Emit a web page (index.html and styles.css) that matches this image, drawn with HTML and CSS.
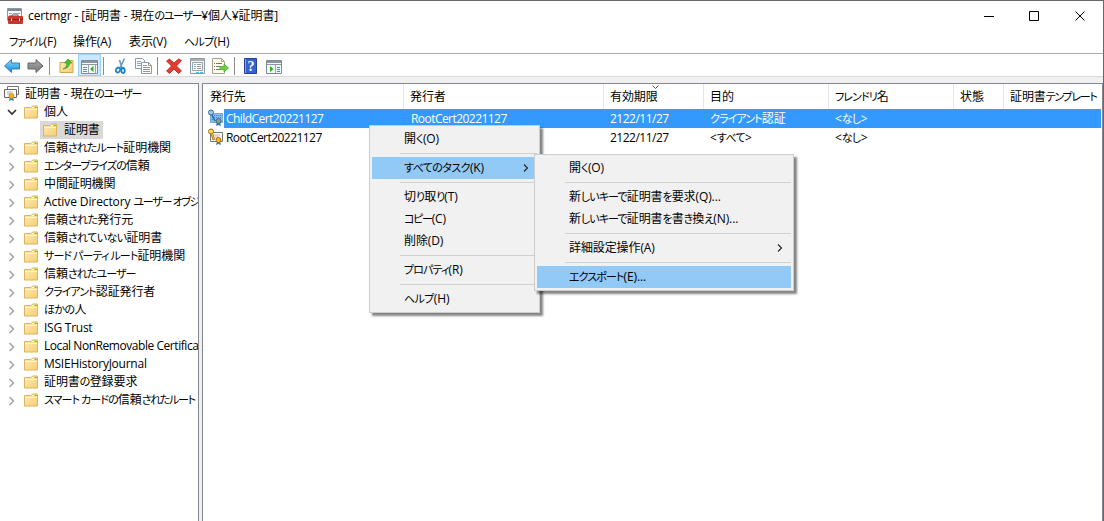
FILE: index.html
```
<!DOCTYPE html>
<html lang="ja">

<head>
  <meta charset="UTF-8">
  <link rel="stylesheet" href="styles.css">
  <title>certmgr</title>
</head>

<body>
  <!-- icônes réutilisées -->
  <svg class="defs" width="0" height="0">
    <defs>
      <linearGradient id="gold" x1="0" y1="0" x2="1" y2="1"><stop offset="0" stop-color="#ffebb0"/><stop offset="1" stop-color="#f3cf78"/></linearGradient>
      <linearGradient id="blue" x1="0" y1="0" x2="0" y2="1"><stop offset="0" stop-color="#8fdcff"/><stop offset="1" stop-color="#0a8ade"/></linearGradient>
      <linearGradient id="grey" x1="0" y1="0" x2="0" y2="1"><stop offset="0" stop-color="#aaa"/><stop offset="1" stop-color="#777"/></linearGradient>
    </defs>
    <symbol id="folder" viewBox="0 0 15 14">
      <path d="M.5 13V2.500h6.500l1.500-1.500h5v12z" fill="url(#gold)" stroke="#dcb35e"/>
      <path d="M8 2.500h4" stroke="#fff"/><path d="M10.500 2.500h2" stroke="#4a9be0"/>
      <path d="M1 4.500h12" stroke="#fff4cf"/>
    </symbol>
    <symbol id="chev" viewBox="0 0 8 10"><path d="M1.500 1l4 4-4 4" fill="none" stroke="#a6a6a6" stroke-width="1.600"/></symbol>
    <symbol id="sub" viewBox="0 0 6 8"><path d="M1 .5L4.500 4 1 7.500" fill="none" stroke="#222" stroke-width="1.100"/></symbol>
  </svg>

  <div class="window">
    <div class="titlebar">
      <svg class="app-icon" width="16" height="17" viewBox="0 0 16 17">
        <path d="M.5.5h14v12H.5z" fill="#f4f4f4" stroke="#8b98a5"/><path d="M1 2h13" stroke="#7d8b99" stroke-width="2"/><path d="M2 5.500h3M2 7.500h3M6 5.500h7" stroke="#9aa5b1"/>
        <path d="M5 8.500V7h6v1.500" fill="none" stroke="#555"/><rect x="1" y="8" width="15" height="8" rx="1" fill="#c8372e"/><path d="M1 11.500h15" stroke="#8d211b"/><path d="M4.500 10.500V13M12.500 10.500V13" stroke="#eee"/>
      </svg>
      <span class="title">certmgr - [証明書 - 現在<span class="k kk">のユーザー</span>¥個人¥証明書]</span>
      <svg class="ctl" width="102" height="12" viewBox="0 0 102 12" fill="none" stroke="#000">
        <path d="M0 6.500h10M45.500 1.500h9v9h-9zM91.500 1.500l9 9M100.500 1.500l-9 9"/>
      </svg>
    </div>
    <div class="menubar">
      <span class="m1"><span class="k">ファイル</span>(F)</span><span class="m2">操作(A)</span><span class="m3">表示(V)</span><span><span class="kh">ヘルプ</span>(H)</span>
    </div>
    <div class="toolbar">
      <div class="btn"><svg width="17" height="16" viewBox="0 0 17 16"><path d="M.5 8l7-6.500v3.500h8v6h-8v3.500z" fill="url(#blue)" stroke="#3b7fae"/></svg></div>
      <div class="btn"><svg width="17" height="16" viewBox="0 0 17 16"><path d="M16 8L9 1.500V5H1v6h8v3.500z" fill="url(#grey)" stroke="#666"/></svg></div>
      <div class="sep"></div>
      <div class="btn"><svg width="16" height="16" viewBox="0 0 16 16"><path d="M1 14.500v-10h6l1.500-2h5.500v12z" fill="url(#gold)" stroke="#cfa64f"/><path d="M4 11q4-1 4-6H5.500L9 1l4 4h-2.500q0 5-6.500 6z" fill="#45c22c" stroke="#258b18" stroke-width=".6"/></svg></div>
      <div class="btn on"><svg width="17" height="16" viewBox="0 0 17 16"><path d="M.5 2.500h16v13H.5z" fill="#f7f8f9" stroke="#7f8b96"/><path d="M1 4h15" stroke="#8b97a3" stroke-width="2"/><path d="M1 6.500h15" stroke="#8b97a3"/><path d="M2 9.500h4M2 11.500h4M2 13.500h4" stroke="#7c8895"/><path d="M7.500 7v8M14.500 7v8" stroke="#9ba6b0"/><path d="M12.500 8v6L9 11z" fill="#2fae1d"/></svg></div>
      <div class="sep"></div>
      <div class="btn"><svg width="14" height="16" viewBox="0 0 14 16" fill="none"><path d="M10.500.5L6 10M5.500 2L8 10" stroke="#6b9abb" stroke-width="1.600"/><ellipse cx="4" cy="12" rx="2" ry="2.500" transform="rotate(35 4 12)" stroke="#1283cf" stroke-width="1.800"/><ellipse cx="9" cy="12.500" rx="1.700" ry="2.500" stroke="#1283cf" stroke-width="1.800"/></svg></div>
      <div class="btn"><svg width="17" height="16" viewBox="0 0 17 16"><path d="M.5.5h7l2 2v8h-9z" fill="#fff" stroke="#8f9aa5"/><path d="M2 3.500h4M2 5.500h5M2 7.500h5" stroke="#86a5c4"/><path d="M6.500 4.500h7l3 3v8h-10z" fill="#fff" stroke="#8f9aa5"/><path d="M13.500 4.500v3h3" fill="none" stroke="#8f9aa5"/><path d="M8 7.500h4M8 9.500h7M8 11.500h7M8 13.500h7" stroke="#739dc9"/></svg></div>
      <div class="sep"></div>
      <div class="btn"><svg width="17" height="16" viewBox="0 0 17 16"><path d="M.5 3l3-2L8 5l4.500-4 3 1.500L10.500 8l5 5-3 2.500L8 11l-4.500 4.500L.5 13l5-5z" fill="#e73a2e" stroke="#b4231c" stroke-width=".8"/></svg></div>
      <div class="btn"><svg width="15" height="16" viewBox="0 0 15 16"><path d="M.5.5h14v15H.5z" fill="#f3f4f5" stroke="#8d98a2"/><path d="M1 2h13" stroke="#a6b0b9" stroke-width="2"/><path d="M2.500 4.500h10v8h-10z" fill="#fff" stroke="#98a3ad"/><path d="M4 6.500h2M4 8.500h2M4 10.500h2" stroke="#6fb4dc"/><path d="M7 6.500h4M7 8.500h4M7 10.500h4" stroke="#999"/><path d="M6 14.500h3M10 14.500h3" stroke="#50bfea"/></svg></div>
      <div class="btn"><svg width="17" height="16" viewBox="0 0 17 16"><path d="M.5.5h9l3 3v12H.5z" fill="#fffbe8" stroke="#a9a38c"/><path d="M9.500.5v3h3" fill="none" stroke="#a9a38c"/><path d="M2 5.500h1M2 8.500h1M2 11.500h1M4 5.500h6M4 8.500h4M4 11.500h4" stroke="#777"/><path d="M8 8.500h4V6l4.500 4-4.500 4v-2.500H8z" fill="#6ccf45" stroke="#3fa42c" stroke-width=".7"/></svg></div>
      <div class="sep"></div>
      <div class="btn"><svg class="help" width="14" height="16" viewBox="0 0 14 16"><path d="M.5.5h12v15H.5z" fill="#3562cf" stroke="#253f94"/><path d="M1.500 1v14" stroke="#7fa2ea"/><text x="7" y="13" class="q">?</text></svg></div>
      <div class="btn"><svg width="17" height="16" viewBox="0 0 17 16"><path d="M.5 2.500h15v13H.5z" fill="#f7f8f9" stroke="#7f8b96"/><path d="M1 4h14" stroke="#8b97a3" stroke-width="2"/><path d="M1 6.500h14" stroke="#8b97a3"/><path d="M9.500 7v8" stroke="#9ba6b0"/><path d="M11 9.500h3M11 11.500h3M11 13.500h3" stroke="#3c8bd0"/><path d="M4 8v6l3.500-3z" fill="#2fae1d"/></svg></div>
    </div>

    <div class="panes">
      <div class="tree">
        <div class="root">
          <svg width="16" height="16" viewBox="0 0 16 16"><path d="M3.500.5h11v8h-11z" fill="#fff" stroke="#777"/><path d="M.5 3.500h12v8H.5z" fill="#fff" stroke="#666"/><path d="M3 6h6M3 8h3" stroke="#aaa"/><path d="M6 11l-1 4 2.500-1 2.500 1-1-4z" fill="#2d7fd3"/><circle cx="7.500" cy="10" r="2.500" fill="#f2b41e" stroke="#b97b09" stroke-width=".7"/></svg>
          <span>証明書 - 現在<span class="k kk">のユーザー</span></span>
        </div>
        <div class="node"><svg class="arrow open" viewBox="0 0 10 8"><path d="M1 2l4 4 4-4" fill="none" stroke="#333" stroke-width="1.700"/></svg><svg class="fold"><use href="#folder"/></svg><span>個人</span></div>
        <div class="leaf"><svg class="fold"><use href="#folder"/></svg><span>証明書</span></div>
        <div class="node"><svg class="arrow"><use href="#chev"/></svg><svg class="fold"><use href="#folder"/></svg><span>信頼<span class="k">されたルート</span>証明機関</span></div>
        <div class="node"><svg class="arrow"><use href="#chev"/></svg><svg class="fold"><use href="#folder"/></svg><span><span class="k">エンタープライズの</span>信頼</span></div>
        <div class="node"><svg class="arrow"><use href="#chev"/></svg><svg class="fold"><use href="#folder"/></svg><span>中間証明機関</span></div>
        <div class="node"><svg class="arrow"><use href="#chev"/></svg><svg class="fold"><use href="#folder"/></svg><span>Active Directory <span class="k kk">ユーザー オブジ</span></span></div>
        <div class="node"><svg class="arrow"><use href="#chev"/></svg><svg class="fold"><use href="#folder"/></svg><span>信頼<span class="kh">された</span>発行元</span></div>
        <div class="node"><svg class="arrow"><use href="#chev"/></svg><svg class="fold"><use href="#folder"/></svg><span>信頼<span class="kh">されていない</span>証明書</span></div>
        <div class="node"><svg class="arrow"><use href="#chev"/></svg><svg class="fold"><use href="#folder"/></svg><span><span class="k">サード パーティ ルート</span>証明機関</span></div>
        <div class="node"><svg class="arrow"><use href="#chev"/></svg><svg class="fold"><use href="#folder"/></svg><span>信頼<span class="k">されたユーザー</span></span></div>
        <div class="node"><svg class="arrow"><use href="#chev"/></svg><svg class="fold"><use href="#folder"/></svg><span><span class="k">クライアント</span>認証発行者</span></div>
        <div class="node"><svg class="arrow"><use href="#chev"/></svg><svg class="fold"><use href="#folder"/></svg><span><span class="kh">ほかの</span>人</span></div>
        <div class="node"><svg class="arrow"><use href="#chev"/></svg><svg class="fold"><use href="#folder"/></svg><span class="tight">ISG Trust</span></div>
        <div class="node"><svg class="arrow"><use href="#chev"/></svg><svg class="fold"><use href="#folder"/></svg><span class="tighter">Local NonRemovable Certifica</span></div>
        <div class="node"><svg class="arrow"><use href="#chev"/></svg><svg class="fold"><use href="#folder"/></svg><span class="tight">MSIEHistoryJournal</span></div>
        <div class="node"><svg class="arrow"><use href="#chev"/></svg><svg class="fold"><use href="#folder"/></svg><span>証明書<span class="kh">の</span>登録要求</span></div>
        <div class="node"><svg class="arrow"><use href="#chev"/></svg><svg class="fold"><use href="#folder"/></svg><span><span class="k">スマート カードの</span>信頼<span class="k kk">されたルート</span></span></div>
      </div>

      <div class="list">
        <div class="row head">
          <span>発行先</span><span>発行者</span><span class="sorted">有効期限<svg class="sort" width="7" height="4" viewBox="0 0 7 4"><path d="M.5.5l3 3 3-3" fill="none" stroke="#555"/></svg></span><span>目的</span><span><span class="k">フレンドリ</span>名</span><span>状態</span><span>証明書<span class="k kk">テンプレート</span></span>
        </div>
        <div class="row selected">
          <span class="name"><svg width="17" height="17" viewBox="0 0 17 17"><path d="M3.500 4.500h12v9h-12z" fill="#87baf0" stroke="#2f75bd" stroke-dasharray="1 1"/><path d="M5 6.500h9M5 8.500h9M5 10.500h6" stroke="#3489e8" stroke-dasharray="1 1"/><circle cx="4" cy="3.500" r="2.500" fill="#9ccbf0" stroke="#256fae"/><path d="M5 6l3 6" stroke="#256fae" stroke-width="1.500"/><path d="M10 13l-1 4 2.500-1 2.500 1-1-4z" fill="#1f72cc"/><circle cx="11.500" cy="12" r="2.500" fill="#91a65e" stroke="#35699b"/></svg>ChildCert20221127</span><span class="cert">RootCert20221127</span><span class="date">2122/11/27</span><span><span class="k">クライアント</span>認証</span><span>&lt;<span class="kh">なし</span>&gt;</span><span></span><span></span>
        </div>
        <div class="row">
          <span class="name"><svg width="17" height="17" viewBox="0 0 17 17"><path d="M3.500 4.500h12v9h-12z" fill="#fff" stroke="#777"/><path d="M7 7h6M8 9h4" stroke="#c9a8a0"/><circle cx="4" cy="3.500" r="2.500" fill="#ffd75c" stroke="#9d6b0b"/><path d="M5 6l2 6" stroke="#9d6b0b" stroke-width="2.500"/><path d="M5 6l2 5.500" stroke="#ffcf45"/><path d="M10 13l-1 4 2.500-1 2.500 1-1-4z" fill="#2d7fd3"/><circle cx="11.500" cy="12" r="2.500" fill="#f5bd2e" stroke="#a86e08"/></svg>RootCert20221127</span><span></span><span class="date">2122/11/27</span><span>&lt;<span class="kh">すべて</span>&gt;</span><span>&lt;<span class="kh">なし</span>&gt;</span><span></span><span></span>
        </div>
      </div>
    </div>
  </div>

  <div class="menu context">
    <div class="item">開<span class="kh">く</span>(O)</div>
    <hr>
    <div class="item hot"><span class="kh">すべてのタスク</span>(K)<svg class="sub"><use href="#sub"/></svg></div>
    <hr>
    <div class="item">切<span class="k">り</span>取<span class="k">り</span>(T)</div>
    <div class="item"><span class="k kk">コピー</span>(C)</div>
    <div class="item">削除(D)</div>
    <hr>
    <div class="item"><span class="k">プロパティ</span>(R)</div>
    <hr>
    <div class="item"><span class="kh">ヘルプ</span>(H)</div>
  </div>

  <div class="menu submenu">
    <div class="item">開<span class="kh">く</span>(O)</div>
    <hr>
    <div class="item">新<span class="k">しいキーで</span>証明書<span class="k">を</span>要求(Q)...</div>
    <div class="item">新<span class="k">しいキーで</span>証明書<span class="k">を</span>書<span class="k">き</span>換<span class="k">え</span>(N)...</div>
    <hr>
    <div class="item">詳細設定操作(A)<svg class="sub"><use href="#sub"/></svg></div>
    <hr>
    <div class="item hot"><span class="k">エクスポート</span>(E)...</div>
  </div>
</body>

</html>
```
FILE: styles.css
```
* {
  box-sizing: border-box;
}

body {
  margin: 0;
  height: 521px;
  overflow: hidden;
  background-color: #fff;
  color: #000;
  font-family: "Open Sans", "Noto Sans CJK JP", sans-serif;
  font-size: 12px;
  line-height: 18px;
  letter-spacing: -0.1px;
  white-space: nowrap;
}

svg {
  flex: none;
}

.defs {
  position: absolute;
}

/* kana proportionnels */
.k,
.kh {
  font-size: 11px;
  font-feature-settings: "palt";
  letter-spacing: -0.9px;
}

.k.kk {
  letter-spacing: -1.3px;
}

.kh {
  letter-spacing: -0.6px;
}

.tight {
  letter-spacing: -0.25px;
}

.tighter {
  letter-spacing: -0.45px;
}

.window {
  display: flex;
  flex-direction: column;
  height: 521px;
  border-top: 1px solid #69676b;
  border-right: 1px solid #69676b;
}

.titlebar {
  display: flex;
  align-items: center;
  height: 30px;
  padding: 0 17px 0 7px;
}

.title {
  margin-left: 5px;
}

.ctl {
  margin-left: auto;
}

.menubar {
  display: flex;
  height: 22px;
  padding: 2px 0 0 9px;
}

.m1 {
  width: 64px;
}

.m2 {
  width: 56px;
}

.m3 {
  width: 55px;
}

.toolbar {
  display: flex;
  height: 24px;
  padding-left: 1px;
  border-top: 1px solid #a9acb5;
  border-bottom: 1px solid #d9d9d9;
}

.btn {
  display: flex;
  align-items: center;
  justify-content: center;
  width: 23px;
  height: 22px;
  padding-top: 2px;
}

.btn.on {
  background-color: #cce8ff;
  border: 1px solid #99d1ff;
}

.sep {
  width: 1px;
  height: 18px;
  margin: 3px 5px 0 2px;
  background-color: #8c8c8c;
}

.help {
  margin-right: 2px;
}

.q {
  font-family: "Liberation Serif", serif;
  font-size: 14px;
  font-weight: bold;
  fill: #fff;
  text-anchor: middle;
}

.panes {
  display: flex;
  flex: 1;
  gap: 3px;
  padding-top: 6px;
  background-color: #f0f0f0;
}

.tree {
  flex: none;
  width: 199px;
  padding-top: 1px;
  background-color: #fff;
  border-top: 1px solid #828790;
  border-right: 1px solid #828790;
  overflow: hidden;
}

.root,
.node,
.leaf {
  display: flex;
  align-items: center;
  height: 18px;
}

.root {
  padding-left: 4px;
  gap: 5px;
}

.node {
  padding-left: 8px;
}

.arrow {
  width: 8px;
  height: 10px;
  margin: 2px 8px 0 0;
}

.arrow.open {
  width: 10px;
  height: 8px;
  margin: 0 7px 0 -1px;
}

.fold {
  width: 15px;
  height: 14px;
  margin-right: 5px;
}

.leaf {
  width: 63px;
  margin-left: 40px;
  padding-left: 3px;
  background-color: #d9d9d9;
}

.leaf .fold {
  margin-right: 6px;
}

.list {
  flex: 1;
  min-width: 0;
  background-color: #fff;
  border: 1px solid #828790;
  border-bottom: none;
}

.row {
  display: grid;
  grid-template-columns: 201px 200px 100px 125px 125px 50px 97px;
  height: 19px;
  line-height: 20px;
}

.row > span {
  padding-left: 6px;
}

.row .name {
  display: flex;
  padding-left: 4px;
  gap: 2px;
  letter-spacing: -0.55px;
}

.row .cert {
  padding-left: 7px;
  letter-spacing: -0.55px;
}

.date {
  letter-spacing: -0.5px;
}

.head {
  height: 25px;
  line-height: 25px;
}

.head > span {
  padding-left: 7px;
  border-right: 1px solid #e5e5e5;
}

.head > span:nth-child(n+2) {
  padding-left: 6px;
}

.head > span:last-child {
  border-right: none;
}

.sorted {
  position: relative;
}

.sort {
  position: absolute;
  left: 48px;
  top: 1px;
}

.selected {
  color: #fff;
  background: linear-gradient(90deg, #fff 21px, #3399ff 21px);
  margin-right: 1px;
}

.menu {
  position: absolute;
  padding: 2px;
  background-color: #f1f1f1;
  border: 1px solid #ccc;
  box-shadow: 3px 3px 2px rgba(0, 0, 0, 0.48);
}

.context {
  left: 369px;
  top: 125px;
  width: 171px;
}

.submenu {
  left: 534px;
  top: 154px;
  width: 260px;
}

.item {
  display: flex;
  align-items: center;
  height: 22px;
  padding: 0 8px 0 32px;
}

.hot {
  background-color: #91c9f7;
}

.sub {
  width: 6px;
  height: 8px;
  margin-left: auto;
}

.menu hr {
  height: 1px;
  margin: 3px 0 3px 28px;
  border: none;
  background-color: #d0d0d0;
}
```
